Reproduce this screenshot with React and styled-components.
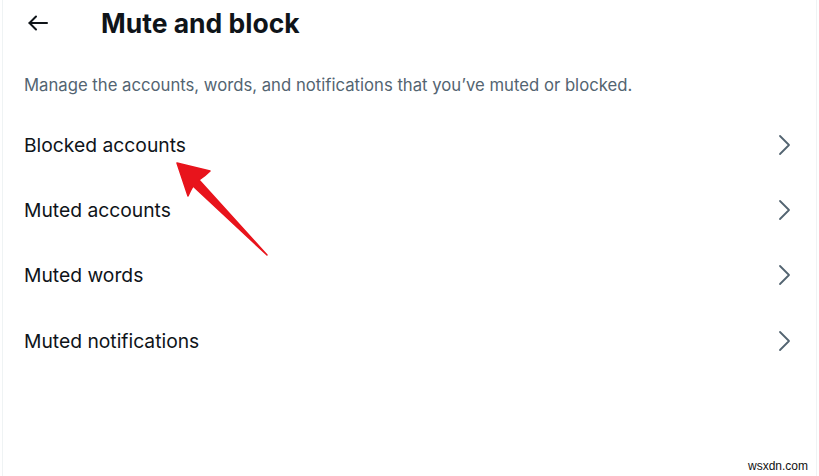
import styled, { createGlobalStyle } from "styled-components";

const GlobalStyle = createGlobalStyle`
    body {
        margin: 0;
        background: #ffffff;
        font-family: Inter, "Noto Sans", sans-serif;
    }
`

const Page = styled.div`
    position: relative;
    width: 819px;
    height: 476px;
    overflow: hidden;
    background: #ffffff;
`

const Panel = styled.div`
    margin-left: 2px;
    width: 815px;
    height: 476px;
    border-left: 1px solid #eff3f4;
    border-right: 1px solid #eff3f4;
    box-sizing: border-box;
`

const Header = styled.div`
    display: flex;
    align-items: center;
    height: 45px;
    padding-left: 25px;
`

const BackButton = styled.div`
    width: 20px;
    height: 20px;
    display: flex;
    align-items: center;
    margin-right: 53px;
    color: #0f1419;
`

const Title = styled.h1`
    margin: 0;
    font-size: 26.5px;
    font-weight: 700;
    color: #0f1419;
`

const Desc = styled.p`
    margin: 29px 0 0;
    padding: 0 21px;
    font-size: 16.7px;
    line-height: 22px;
    color: #536471;
`

const List = styled.div`
    margin-top: 16px;
    display: flex;
    flex-direction: column;
`

const Row = styled.div`
    display: flex;
    align-items: center;
    justify-content: space-between;
    height: 65.3px;
    padding: 0 20px 0 21px;
    font-size: 19.3px;
    color: #0f1419;
`

const Chevron = styled.svg`
    width: 24px;
    height: 24px;
    color: #536471;
`

const Annotation = styled.svg`
    position: absolute;
    left: 0;
    top: 0;
    pointer-events: none;
`

const Watermark = styled.div`
    position: absolute;
    right: 11px;
    bottom: 3px;
    font-family: "Liberation Sans", Arial, sans-serif;
    font-size: 12px;
    color: #111111;
`

const items = ["Blocked accounts", "Muted accounts", "Muted words", "Muted notifications"]

const App = () => {
    return (
        <Page>
            <GlobalStyle />
            <Panel>
                <Header>
                    <BackButton>
                        <svg width="20" height="20" viewBox="0 0 20 20" fill="none" stroke="currentColor" strokeWidth="2" strokeLinecap="round" strokeLinejoin="round">
                            <path d="M1.5 10H19" />
                            <path d="M8 3.5L1.5 10L8 16.5" />
                        </svg>
                    </BackButton>
                    <Title>Mute and block</Title>
                </Header>
                <Desc>Manage the accounts, words, and notifications that you’ve muted or blocked.</Desc>
                <List>
                    {items.map((item) => (
                        <Row key={item}>
                            <span>{item}</span>
                            <Chevron viewBox="0 0 24 24" fill="none" stroke="currentColor" strokeWidth="1.8" strokeLinecap="round" strokeLinejoin="round">
                                <path d="M8 3l9 9-9 9" />
                            </Chevron>
                        </Row>
                    ))}
                </List>
            </Panel>
            <Annotation width="819" height="476" viewBox="0 0 819 476">
                <path d="M177 163 L210 171 Q205 176 199 180 L267 255 L193 186 Q190 191 188 196 Z" fill="#e8141c" stroke="#e8141c" strokeWidth="1.5" strokeLinejoin="round" />
            </Annotation>
            <Watermark>wsxdn.com</Watermark>
        </Page>
    )
}

export default App
